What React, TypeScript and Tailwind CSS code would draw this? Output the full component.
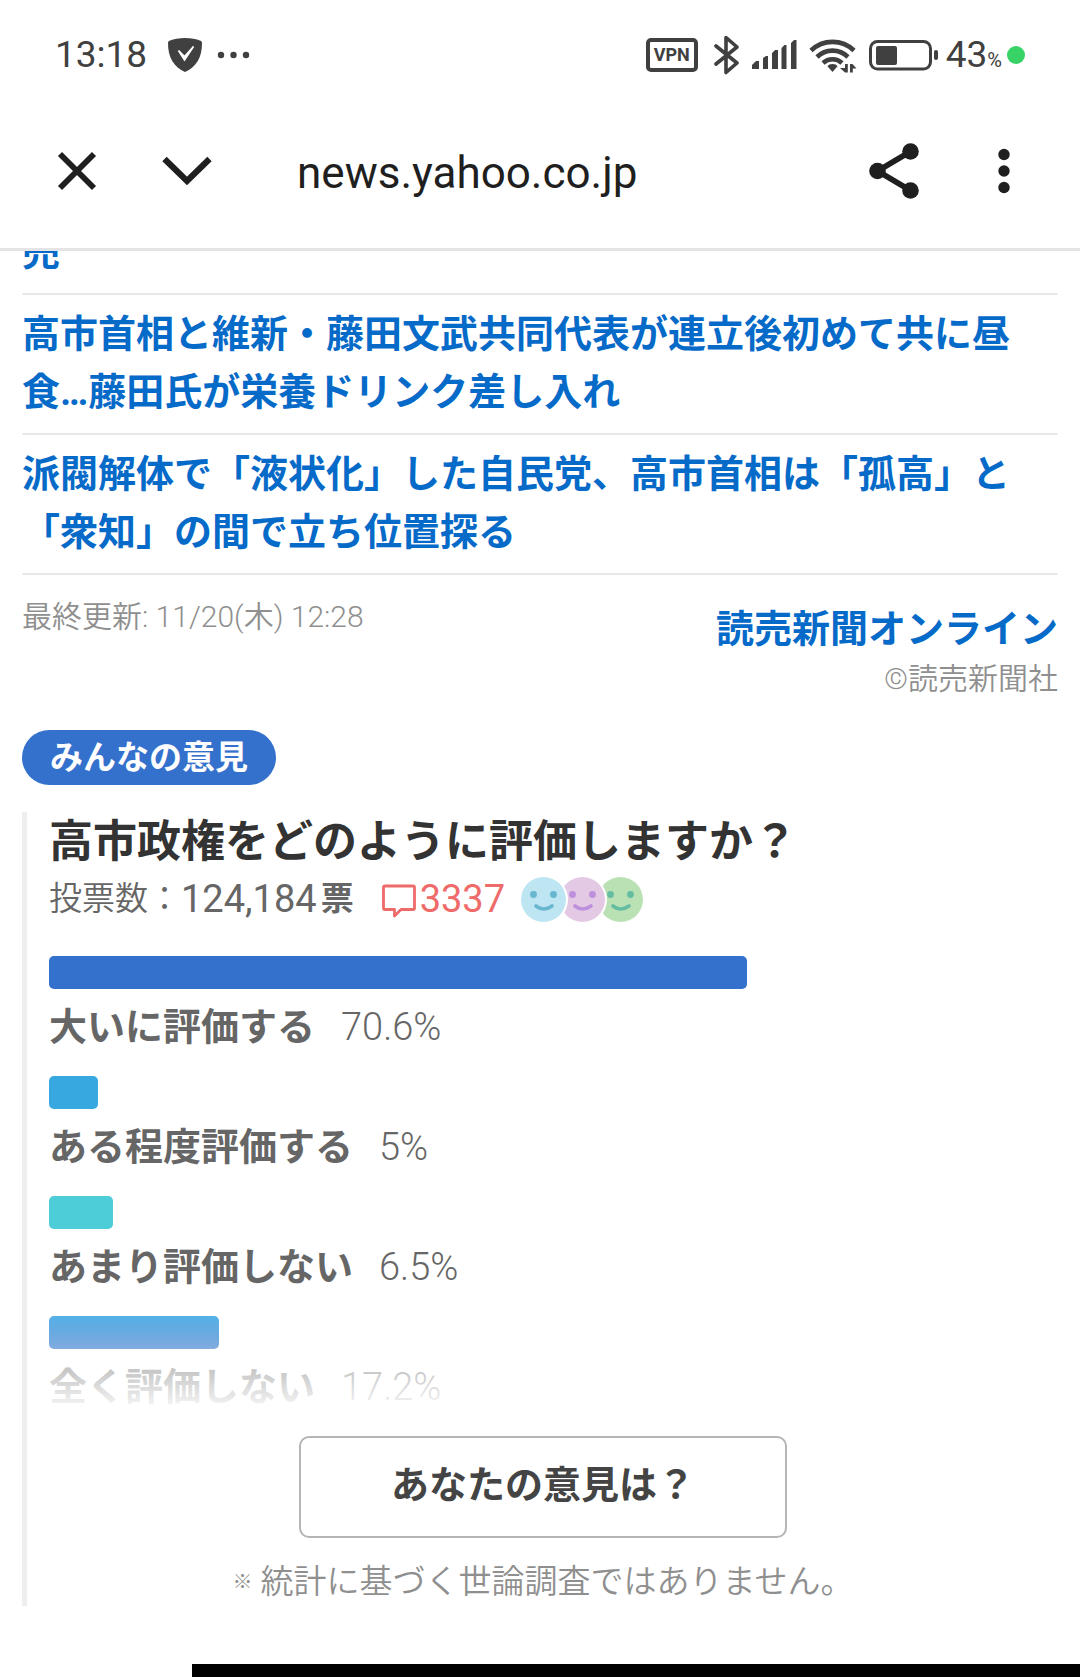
type Option = {
  label: string;
  percent: number;
  color: string;
};

const headlines = [
  "売",
  "高市首相と維新・藤田文武共同代表が連立後初めて共に昼食…藤田氏が栄養ドリンク差し入れ",
  "派閥解体で「液状化」した自民党、高市首相は「孤高」と「衆知」の間で立ち位置探る",
];

const options: Option[] = [
  { label: "大いに評価する", percent: 70.6, color: "bg-[#3471cd]" },
  { label: "ある程度評価する", percent: 5, color: "bg-[#38a8e0]" },
  { label: "あまり評価しない", percent: 6.5, color: "bg-[#4ccdd8]" },
  {
    label: "全く評価しない",
    percent: 17.2,
    color: "bg-linear-to-b from-[#2c9fe1] to-[#1966c4]",
  },
];

// drawn right to left so that each face overlaps the next one
const faces = [
  { x: 77, fill: "#bae1b4", line: "#64bda0" },
  { x: 39, fill: "#e4c9e5", line: "#bd8fdc" },
  { x: 0, fill: "#bde5f2", line: "#68b6cf" },
];

function StatusBar() {
  return (
    <div className="flex h-[94px] items-center justify-between pt-[15px] pr-[55px] pl-[55px] text-[#404040]">
      <div className="flex items-center">
        <span className="text-[37px] font-[450]">13:18</span>
        <svg className="ml-5" width="36" height="36" viewBox="0 0 36 36">
          <path
            d="M18 1c6 0 11 1 15.500 2.800.9.400 1.500 1.200 1.500 2.200C35 21 29 30 18 35 7 30 1 21 1 6c0-1 .6-1.800 1.500-2.200C7 2 12 1 18 1z"
            fill="currentColor"
          />
          <path
            d="M11.500 13.500l6 6 9-10-9 13.500z"
            fill="#fff"
            stroke="#fff"
            strokeWidth="1.600"
          />
        </svg>
        <svg className="ml-[14px]" width="34" height="8" viewBox="0 0 34 8">
          <circle cx="4" cy="4" r="3.200" fill="currentColor" />
          <circle cx="16.500" cy="4" r="3.200" fill="currentColor" />
          <circle cx="29" cy="4" r="3.200" fill="currentColor" />
        </svg>
      </div>
      <div className="flex items-center">
        <span className="flex h-[34px] w-[52px] items-center justify-center rounded-[5px] border-4 border-[#404040] text-lg font-bold">
          VPN
        </span>
        <svg className="ml-4" width="26" height="40" viewBox="0 0 26 40">
          <path
            d="M2 11l21 17-11 9.500V2.500L23 12 2 29"
            fill="none"
            stroke="currentColor"
            strokeWidth="3.600"
            strokeLinejoin="round"
            strokeLinecap="round"
          />
        </svg>
        <svg className="ml-3" width="45" height="30" viewBox="0 0 45 30">
          <path
            d="M0 29v-4l4-4h3v8zM11 29V18l3-2h2v13zM20 29V13l3-3h3v19zM29.500 29V8l3-3h2v24zM39 29V3l3-3h2.500v29z"
            fill="currentColor"
          />
        </svg>
        <svg className="ml-3" width="48" height="36" viewBox="0 0 48 36">
          <g fill="none" stroke="currentColor" strokeWidth="4.600">
            <path d="M2 13.500a31 31 0 0 1 43 0" />
            <path d="M8 20a22 22 0 0 1 31 0" />
            <path d="M14 26a14 14 0 0 1 19 0" />
          </g>
          <path
            d="M23.500 27c2.500 0 4 .8 5 2.300L23.500 35l-5-5.700c1-1.500 2.500-2.300 5-2.300z"
            fill="currentColor"
          />
          <path
            d="M36 27h2.800v8.500H36l-5-4.500h5zM41 35.500V27h2.500l4 4.500h-3.700v4z"
            fill="currentColor"
          />
        </svg>
        <svg className="ml-3" width="70" height="32" viewBox="0 0 70 32">
          <rect
            x="1.500"
            y="2.500"
            width="60"
            height="27.500"
            rx="7"
            fill="none"
            stroke="currentColor"
            strokeWidth="3"
          />
          <rect x="7" y="7" width="21" height="19" rx="2" fill="currentColor" />
          <rect x="65" y="11" width="4" height="10" rx="2" fill="currentColor" />
        </svg>
        <span className="ml-[7px] flex items-baseline text-[37px] font-[450]">
          43
          <span className="text-xl font-normal">%</span>
        </span>
        <span className="ml-[5px] size-[18px] rounded-full bg-[#37d366]" />
      </div>
    </div>
  );
}

function Toolbar() {
  return (
    <div className="flex h-[157px] items-center border-b-3 border-[#e4e4e4] pr-16 pl-[56px] text-[#1f1f1f]">
      <button type="button" aria-label="閉じる">
        <svg width="42" height="42" viewBox="0 0 42 42">
          <path
            d="M4 4l34 34m0-34L4 38"
            stroke="currentColor"
            strokeWidth="5.800"
          />
        </svg>
      </button>
      <button type="button" aria-label="最小化" className="ml-16">
        <svg width="50" height="30" viewBox="0 0 50 30">
          <path
            d="M2.500 3L25 25l22.500-22"
            fill="none"
            stroke="currentColor"
            strokeWidth="6.200"
          />
        </svg>
      </button>
      <p className="ml-[85px] flex-1 pt-1 text-[44px]">news.yahoo.co.jp</p>
      <button type="button" aria-label="共有">
        <svg width="52" height="56" viewBox="0 0 52 56">
          <path
            d="M42.500 8.500L9.500 28l33 19.500"
            fill="none"
            stroke="currentColor"
            strokeWidth="5.600"
          />
          <circle cx="42.500" cy="8.500" r="8.300" fill="currentColor" />
          <circle cx="9.500" cy="28" r="8.300" fill="currentColor" />
          <circle cx="42.500" cy="47.500" r="8.300" fill="currentColor" />
        </svg>
      </button>
      <button type="button" aria-label="メニュー" className="ml-[72px]">
        <svg width="24" height="46" viewBox="0 0 24 46">
          <circle cx="12" cy="6.500" r="5.700" fill="currentColor" />
          <circle cx="12" cy="23" r="5.700" fill="currentColor" />
          <circle cx="12" cy="39.500" r="5.700" fill="currentColor" />
        </svg>
      </button>
    </div>
  );
}

function Faces() {
  return (
    <svg className="ml-4" width="122" height="45" viewBox="0 0 122 45">
      {faces.map(({ x, fill, line }) => (
        <g key={x} transform={`translate(${x} 0)`}>
          <circle cx="22.500" cy="22.500" r="24.500" fill="#fff" />
          <circle cx="22.500" cy="22.500" r="22.500" fill={fill} />
          <circle cx="12.500" cy="17.500" r="3.400" fill={line} />
          <circle cx="32.500" cy="17.500" r="3.400" fill={line} />
          <path
            d="M15 29q7.500 6 16 0"
            fill="none"
            stroke={line}
            strokeWidth="3.600"
            strokeLinecap="round"
          />
        </g>
      ))}
    </svg>
  );
}

function Poll() {
  return (
    <section className="mt-[27px] border-l-5 border-[#eee] pr-[21px] pl-[22px]">
      <h2 className="text-[44px] leading-[60px] font-bold text-[#333]">
        高市政権をどのように評価しますか？
      </h2>
      <div className="flex h-[54px] items-center text-[33px] text-[#666]">
        <span className="font-[350]">投票数：</span>
        <span className="text-[38px] font-[450]">124,184</span>
        <span className="ml-1 font-bold">票</span>
        <a href="#comments" className="ml-7 flex items-center text-[#ee6b69]">
          <svg width="34" height="34" viewBox="0 0 34 34" className="mt-1">
            <path
              d="M3 2h28q1.500 0 1.500 1.500V24q0 1.500-1.500 1.500H19L12.500 32v-6.500H3q-1.500 0-1.500-1.500V3.500Q1.500 2 3 2z"
              fill="none"
              stroke="currentColor"
              strokeWidth="2.800"
              strokeLinejoin="round"
            />
          </svg>
          <span className="ml-1 text-[38px] font-[450]">3337</span>
        </a>
        <Faces />
      </div>
      <div className="relative pt-[30px]">
        <ul className="flex flex-col gap-[21px]">
          {options.map((option) => (
            <li key={option.label}>
              <div
                className={`h-[33px] rounded-[5px] ${option.color}`}
                style={{ width: `${option.percent}%` }}
              />
              <p className="mt-[10px] flex items-baseline gap-[26px] text-[38px] leading-[56px] text-[#666]">
                <span className="font-bold">{option.label}</span>
                <span className="font-light">{option.percent}%</span>
              </p>
            </li>
          ))}
        </ul>
        <div className="absolute inset-x-0 bottom-0 h-[122px] bg-linear-to-b from-white/0 to-white" />
      </div>
      <button
        type="button"
        className="mx-auto mt-[21px] block h-[102px] w-[488px] rounded-[10px] border-2 border-[#b5b5b5] pb-1 text-[38px] font-bold text-[#444]"
      >
        あなたの意見は？
      </button>
      <p className="flex items-center justify-center gap-2 pt-[22px] pb-[2px] text-[33px] leading-[44px] font-[350] text-[#8f8f8f]">
        <span className="text-xl">※</span>
        統計に基づく世論調査ではありません。
      </p>
    </section>
  );
}

export default function App() {
  return (
    <div
      lang="ja"
      className="bg-white font-[Roboto,'Noto_Sans_CJK_JP',sans-serif]"
    >
      <header>
        <StatusBar />
        <Toolbar />
      </header>
      <main className="overflow-hidden px-[22px]">
        {/* scrolled up so that the first row sits half under the toolbar */}
        <ul className="-mt-[38px]">
          {headlines.map((headline) => (
            <li key={headline} className="border-b-2 border-[#e6e9ea] pt-[10px] pb-3">
              <a
                href="#article"
                className="block text-[38px] leading-[58px] font-bold text-[#066ac8]"
              >
                {headline}
              </a>
            </li>
          ))}
        </ul>
        <div className="flex justify-between pt-5 text-[30px] font-[350] text-[#8f8f8f]">
          <p className="leading-[44px]">最終更新: 11/20(木) 12:28</p>
          <div className="pt-[6px] text-right">
            <a
              href="#publisher"
              className="block text-[38px] leading-[56px] font-bold text-[#066ac8]"
            >
              読売新聞オンライン
            </a>
            <p className="leading-[43px]">©読売新聞社</p>
          </div>
        </div>
        <p className="mt-[30px] w-fit rounded-full bg-[#3471cd] px-7 text-[33px] leading-[55px] font-bold text-white">
          みんなの意見
        </p>
        <Poll />
      </main>
      <div className="mt-[58px] ml-[192px] h-[13px] bg-black" />
    </div>
  );
}
